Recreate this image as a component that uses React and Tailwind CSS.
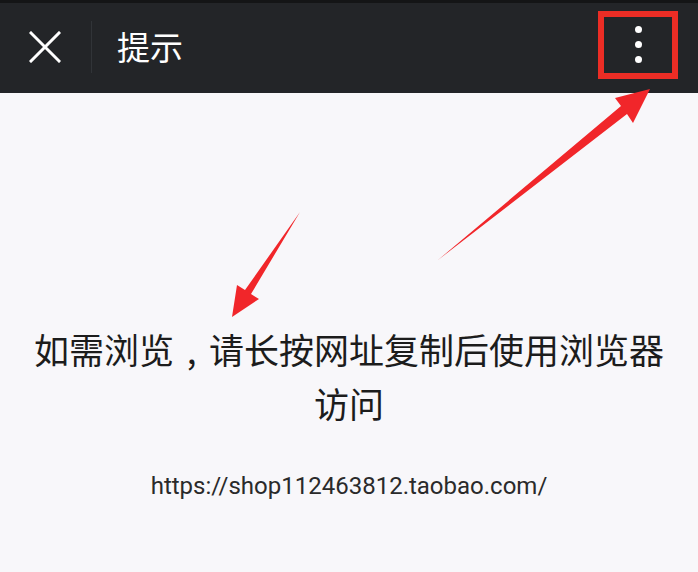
import React from 'react';

const cjk = { fontFamily: '"Noto Sans CJK SC", "Noto Sans", sans-serif' };

const Header = () => (
  <div className="h-[93px] bg-[#232528] border-t-[3px] border-[#141516] flex items-center">
    <div className="w-[91px] h-full flex items-center justify-center">
      <svg width="32" height="32" viewBox="0 0 32 32" className="-mt-[3px] -ml-[2px]">
        <path d="M2 2 L30 30 M30 2 L2 30" stroke="#fff" strokeWidth="3" strokeLinecap="square" />
      </svg>
    </div>
    <div className="w-px h-[52px] bg-[#313438] -mt-[3px]" />
    <div className="ml-[25px] text-white text-[33px] leading-none -mt-[3px]" style={cjk}>
      提示
    </div>
    <div className="ml-auto mr-[20px] w-[80px] h-[68px] border-[6px] border-[#ec2d25] -mt-[7px] flex flex-col items-center justify-center gap-[8px]">
      <span className="w-[7px] h-[7px] rounded-full bg-white" />
      <span className="w-[7px] h-[7px] rounded-full bg-white" />
      <span className="w-[7px] h-[7px] rounded-full bg-white" />
    </div>
  </div>
);

const Arrows = () => (
  <svg className="absolute inset-0 pointer-events-none" width="698" height="572" viewBox="0 0 698 572">
    <polygon
      points="300,212 251,294 259,299 232,317 237,285 245,290"
      fill="#f1262a"
    />
    <polygon
      points="438,260 621,106 615,98 650,89 633,123 627,114"
      fill="#f1262a"
    />
  </svg>
);

export default function App() {
  return (
    <div className="relative w-[698px] h-[572px] bg-[#f8f7fa] overflow-hidden">
      <Header />
      <div className="pt-[229px] flex flex-col items-center">
        <p className="w-[640px] text-center text-[35px] leading-[54px] text-[#1c1c1c]" style={cjk}>
          如需浏览<span className="inline-block w-[35px] text-center">,</span>请长按网址复制后使用浏览器访问
        </p>
        <p
          className="mt-[40px] text-[24px] leading-[32px] text-[#2a2a2a]"
          style={{ fontFamily: 'Roboto, "Noto Sans", sans-serif' }}
        >
          https://shop112463812.taobao.com/
        </p>
      </div>
      <Arrows />
    </div>
  );
}
